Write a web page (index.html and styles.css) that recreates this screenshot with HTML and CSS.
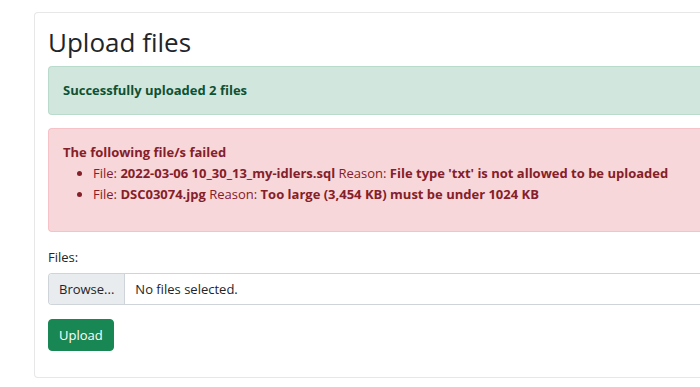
FILE: index.html
```html
<!DOCTYPE html>
<html>
<head>
<meta charset="utf-8">
<link rel="stylesheet" href="styles.css">
</head>
<body>
<div class="page">
  <div class="card">
    <h1 class="title">Upload files</h1>
    <div class="alert alert-success"><strong>Successfully uploaded 2 files</strong></div>
    <div class="alert alert-danger">
      <strong>The following file/s failed</strong>
      <ul class="fail-list">
        <li>File: <strong>2022-03-06 10_30_13_my-idlers.sql</strong> Reason: <strong>File type 'txt' is not allowed to be uploaded</strong></li>
        <li>File: <strong>DSC03074.jpg</strong> Reason: <strong>Too large (3,454 KB) must be under 1024 KB</strong></li>
      </ul>
    </div>
    <label class="form-label">Files:</label>
    <div class="file-input">
      <span class="browse">Browse...</span>
      <span class="file-name">No files selected.</span>
    </div>
    <button class="btn-upload" type="button">Upload</button>
  </div>
</div>
</body>
</html>
```
FILE: styles.css
```css
html, body {
  margin: 0;
  padding: 0;
  background: #fff;
}
body {
  font-family: "Open Sans", "Noto Sans", sans-serif;
  font-size: 13px;
  line-height: 21px;
  color: #212529;
}
.page {
  padding: 12px 0 0 34px;
}
.card {
  border: 1px solid #e6e7e9;
  border-right: 0;
  border-radius: 4px 0 0 4px;
  padding: 12px 0 26px 13px;
  box-sizing: border-box;
}
.title {
  font-size: 26px;
  font-weight: 400;
  line-height: 34px;
  margin: 0 0 7px 0;
  color: #212529;
}
.alert {
  border: 1px solid transparent;
  border-right-width: 0;
  border-radius: 4px 0 0 4px;
  padding: 13px 0 13px 14px;
  margin-bottom: 13px;
}
.alert strong { font-weight: 700; }
.alert-success {
  background: #d1e7dd;
  border-color: #badbcc;
  color: #0f5132;
}
.alert-danger {
  background: #f8d7da;
  border-color: #f5c2c7;
  color: #842029;
}
.fail-list {
  margin: 0 0 13px 0;
  padding-left: 30px;
}
.form-label {
  display: block;
  margin: 15px 0 5px 0;
}
.file-input {
  display: flex;
  height: 32px;
  border: 1px solid #ced4da;
  border-right: 0;
  border-radius: 4px 0 0 4px;
  box-sizing: border-box;
  overflow: hidden;
  margin-bottom: 14px;
  align-items: stretch;
}
.browse {
  background: #e9ecef;
  padding: 0 10px;
  display: flex;
  align-items: center;
  border-right: 1px solid #ced4da;
}
.file-name {
  padding: 0 10px;
  display: flex;
  align-items: center;
}
.btn-upload {
  font-family: inherit;
  font-size: 13px;
  line-height: 21px;
  color: #fff;
  background: #198754;
  border: 1px solid #198754;
  border-radius: 4px;
  padding: 5px 10px;
  height: 32px;
  display: block;
}
```
